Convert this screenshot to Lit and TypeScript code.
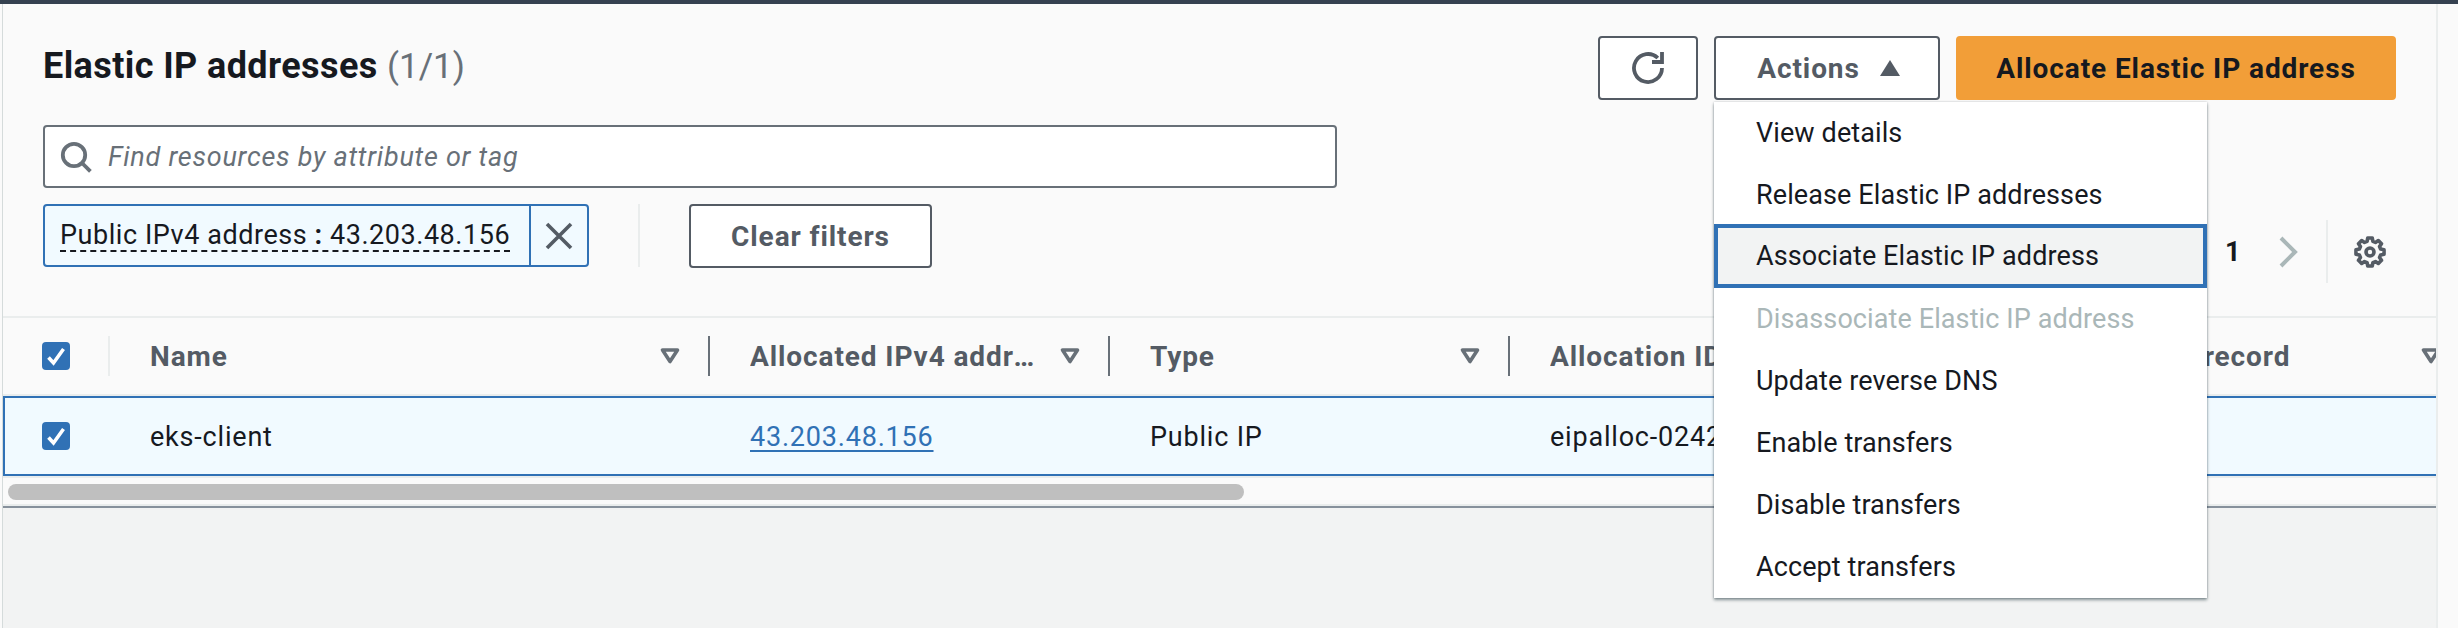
import { LitElement, html, css, svg } from "lit";
import { customElement } from "lit/decorators.js";

const gearPath = (() => {
  const teeth = 8, cx = 16, cy = 16, ro = 14.2, ri = 11;
  const pts: string[] = [];
  for (let i = 0; i < teeth; i++) {
    const a = (i * 2 * Math.PI) / teeth - Math.PI / 2;
    const w = (2 * Math.PI) / teeth;
    const seq: [number, number][] = [
      [ri, a - w * 0.34], [ro, a - w * 0.2], [ro, a + w * 0.2], [ri, a + w * 0.34],
    ];
    for (const [r, t] of seq) pts.push(`${(cx + r * Math.cos(t)).toFixed(2)} ${(cy + r * Math.sin(t)).toFixed(2)}`);
  }
  return "M" + pts.join("L") + "Z";
})();

const columns = [
  { label: "Name", width: 600 },
  { label: "Allocated IPv4 address", width: 400 },
  { label: "Type", width: 400 },
  { label: "Allocation ID", width: 472 },
  { label: "Reverse DNS record", width: 487 },
];

const menu = [
  "View details", "Release Elastic IP addresses", "Associate Elastic IP address",
  "Disassociate Elastic IP address", "Update reverse DNS", "Enable transfers",
  "Disable transfers", "Accept transfers",
];

const check = html`<span class="cb"><svg width="28" height="28" viewBox="0 0 28 28"><path d="M6.5 15.5l5 5.5 10-14" fill="none" stroke="#fff" stroke-width="3.6"/></svg></span>`;

@customElement("app-root")
export class AppRoot extends LitElement {
  static styles = css`
    :host { display: block; width: 2458px; height: 628px; overflow: hidden; background: #fafafa; position: relative;
      font-family: "Roboto", "Noto Sans", sans-serif; font-size: 27px; color: #16191f; }
    * { box-sizing: border-box; }
    .topbar { height: 4px; background: #354150; }
    .shell { display: flex; height: 624px; }
    .gutter-l { width: 3px; background: #fafafa; border-right: 1px solid #d5dbdb; }
    .main { width: 2433px; display: flex; flex-direction: column; position: relative; }
    .gutter-r { width: 2px; background: #eaeded; }
    .toolbar { height: 312px; flex: none; padding: 32px 40px 0; display: flex; flex-direction: column; }
    .head { display: flex; justify-content: space-between; align-items: flex-start; height: 64px; }
    h2 { margin: 8px 0 0; font-size: 36px; font-weight: 700; line-height: 44px; letter-spacing: .4px; }
    h2 span { font-weight: 400; font-size: 35px; color: #687078; letter-spacing: 0; }
    .actions { display: flex; gap: 16px; }
    .btn { height: 64px; border: 2px solid #545b64; border-radius: 4px; background: #fff; color: #545b64; font-family: inherit;
      font-size: 28px; letter-spacing: .9px; font-weight: 700; display: flex; align-items: center; justify-content: center; padding: 0; }
    .refresh { width: 100px; }
    .dd { position: relative; }
    .actions-btn { width: 226px; gap: 20px; padding-left: 3px; }
    .primary { width: 440px; background: #f29e38; border-color: #f29e38; color: #16191f; }
    .menu { position: absolute; top: 66px; left: 0; width: 493px; background: #fff; z-index: 5; letter-spacing: .1px;
      box-shadow: 0 2px 3px rgba(0,28,36,.45), 0 0 2px rgba(0,28,36,.2); }
    .item { height: 62px; padding-left: 42px; display: flex; align-items: center; }
    .item.sel { height: 64px; margin-top: -2px; padding-left: 38px; border: 4px solid #3071b5; background: #f2f3f3; }
    .item.dis { color: #aab7b8; }
    .search { margin-top: 25px; width: 1294px; height: 63px; flex: none; border: 2px solid #687078; border-radius: 4px; background: #fff;
      display: flex; align-items: center; padding-left: 15px; gap: 16px; color: #687078; font-style: italic; letter-spacing: .75px; }
    .filters { margin-top: 16px; height: 63px; display: flex; align-items: stretch; }
    .token { width: 546px; display: flex; border: 2px solid #3071b5; border-radius: 4px; background: #f1faff; }
    .token-text { width: 484px; padding-left: 15px; display: flex; align-items: center; letter-spacing: .55px; }
    .token-text span { border-bottom: 2px dashed #16191f; line-height: 30px; white-space: pre; }
    .token-text b { font-weight: 700; }
    .token-x { flex: 1; border-left: 2px solid #3071b5; display: flex; align-items: center; justify-content: center; }
    .vsep { width: 2px; background: #eaeded; margin: 0 49px; }
    .clear { width: 243px; }
    .pager { margin: 16px 10px 0 auto; height: 63px; display: flex; align-items: center; }
    .page { font-weight: 700; width: 53px; }
    .pager .vsep2 { width: 2px; height: 63px; background: #eaeded; margin: 0 26px 0 28px; }
    .table-wrap { overflow: hidden; flex: none; }
    .thead { height: 80px; border-top: 2px solid #eaeded; border-bottom: 2px solid #eaeded; display: flex; align-items: center; width: 2500px; }
    .sel-cell { width: 106px; flex: none; height: 100%; display: flex; align-items: center; padding-left: 39px; }
    .first-sep { width: 2px; height: 40px; background: #eaeded; flex: none; margin-left: -1px; }
    .cb { width: 28px; height: 28px; border-radius: 4px; background: #3071b5; display: block; }
    .cb svg { display: block; }
    .th { flex: none; height: 40px; display: flex; align-items: center; padding-left: 40px; color: #545b64; font-weight: 700; font-size: 28px; letter-spacing: .9px; }
    .th .lbl { flex: 1; min-width: 0; white-space: nowrap; overflow: hidden; text-overflow: ellipsis; }
    .th svg { flex: none; margin: 0 28px 0 24px; }
    .th.sep { border-right: 2px solid #687078; }
    .row { height: 80px; width: 2500px; display: flex; align-items: center; background: #f1faff; letter-spacing: .8px;
      border-top: 2px solid #3071b5; border-bottom: 2px solid #3071b5; border-left: 2px solid #3071b5; }
    .row .sel-cell { width: 104px; padding-left: 37px; }
    .td { flex: none; padding: 2px 0 0 41px; }
    .td + .td { padding-left: 40px; }
    a { color: #3071b5; text-decoration: underline; text-underline-offset: 4px; text-decoration-thickness: 2px; }
    .scroll { height: 28px; border-top: 2px solid #eaeded; padding: 6px 5px; }
    .thumb { width: 1236px; height: 16px; border-radius: 8px; background: #bfbfbf; }
    .end { height: 4px; border-top: 2px solid #eaeded; background: #87919c; flex: none; }
    .below { flex: 1; background: #f2f3f3; }
  `;

  render() {
    return html`
      <div class="topbar"></div>
      <div class="shell">
        <div class="gutter-l"></div>
        <div class="main">
          <section class="toolbar">
            <div class="head">
              <h2>Elastic IP addresses <span>(1/1)</span></h2>
              <div class="actions">
                <button class="btn refresh">
                  <svg width="32" height="32" viewBox="0 0 16 16" fill="none" stroke="#545b64" stroke-width="1.9"><path d="M15 8A7 7 0 1 1 12.9 3"/><path d="M10 5h5V0"/></svg>
                </button>
                <div class="dd">
                  <button class="btn actions-btn">Actions
                    <svg width="20" height="16" viewBox="0 0 20 16"><path d="M10 0l10 16H0z" fill="#545b64"/></svg>
                  </button>
                  <div class="menu">
                    ${menu.map((m, i) => html`<div class="item ${i === 2 ? "sel" : ""} ${i === 3 ? "dis" : ""}">${m}</div>`)}
                  </div>
                </div>
                <button class="btn primary">Allocate Elastic IP address</button>
              </div>
            </div>
            <div class="search">
              <svg width="32" height="32" viewBox="0 0 16 16" fill="none" stroke="#687078" stroke-width="1.9"><circle cx="7" cy="7" r="5.6"/><path d="M11 11l4.2 4.2"/></svg>
              Find resources by attribute or tag
            </div>
            <div class="filters">
              <div class="token">
                <div class="token-text"><span>Public IPv4 address<b> : </b>43.203.48.156</span></div>
                <div class="token-x"><svg width="32" height="32" viewBox="0 0 32 32" fill="none" stroke="#545b64" stroke-width="3.6"><path d="M4 4l24 24M28 4L4 28"/></svg></div>
              </div>
              <div class="vsep"></div>
              <button class="btn clear">Clear filters</button>
              <div class="pager">
                <span class="page">1</span>
                <svg width="20" height="32" viewBox="0 0 20 32" fill="none" stroke="#aab7b8" stroke-width="4"><path d="M3 2l14 14L3 30"/></svg>
                <span class="vsep2"></span>
                <svg width="32" height="32" viewBox="0 0 32 32" fill="none" stroke="#545b64" stroke-width="3.6" stroke-linejoin="round">
                  ${svg`<path d=${gearPath}/><circle cx="16" cy="16" r="4"/>`}
                </svg>
              </div>
            </div>
          </section>
          <div class="table-wrap">
            <div class="thead">
              <div class="sel-cell">${check}</div>
              <span class="first-sep"></span>
              ${columns.map((c, i) => html`<div class="th ${i < 4 ? "sep" : ""}" style="width:${c.width}px">
                <span class="lbl">${c.label}</span>
                <svg width="20" height="16" viewBox="0 0 20 16" fill="none" stroke="#687078" stroke-width="3.6" stroke-linejoin="round"><path d="M2.5 2h15L10 13.5z"/></svg>
              </div>`)}
            </div>
            <div class="row">
              <div class="sel-cell">${check}</div>
              <div class="td" style="width:601px">eks-client</div>
              <div class="td" style="width:400px"><a>43.203.48.156</a></div>
              <div class="td" style="width:400px">Public IP</div>
              <div class="td" style="width:472px">eipalloc-0242a9f1c</div>
              <div class="td" style="width:487px"></div>
            </div>
            <div class="scroll"><div class="thumb"></div></div>
          </div>
          <div class="end"></div>
          <div class="below"></div>
        </div>
        <div class="gutter-r"></div>
        <div style="flex:1"></div>
      </div>
    `;
  }
}
